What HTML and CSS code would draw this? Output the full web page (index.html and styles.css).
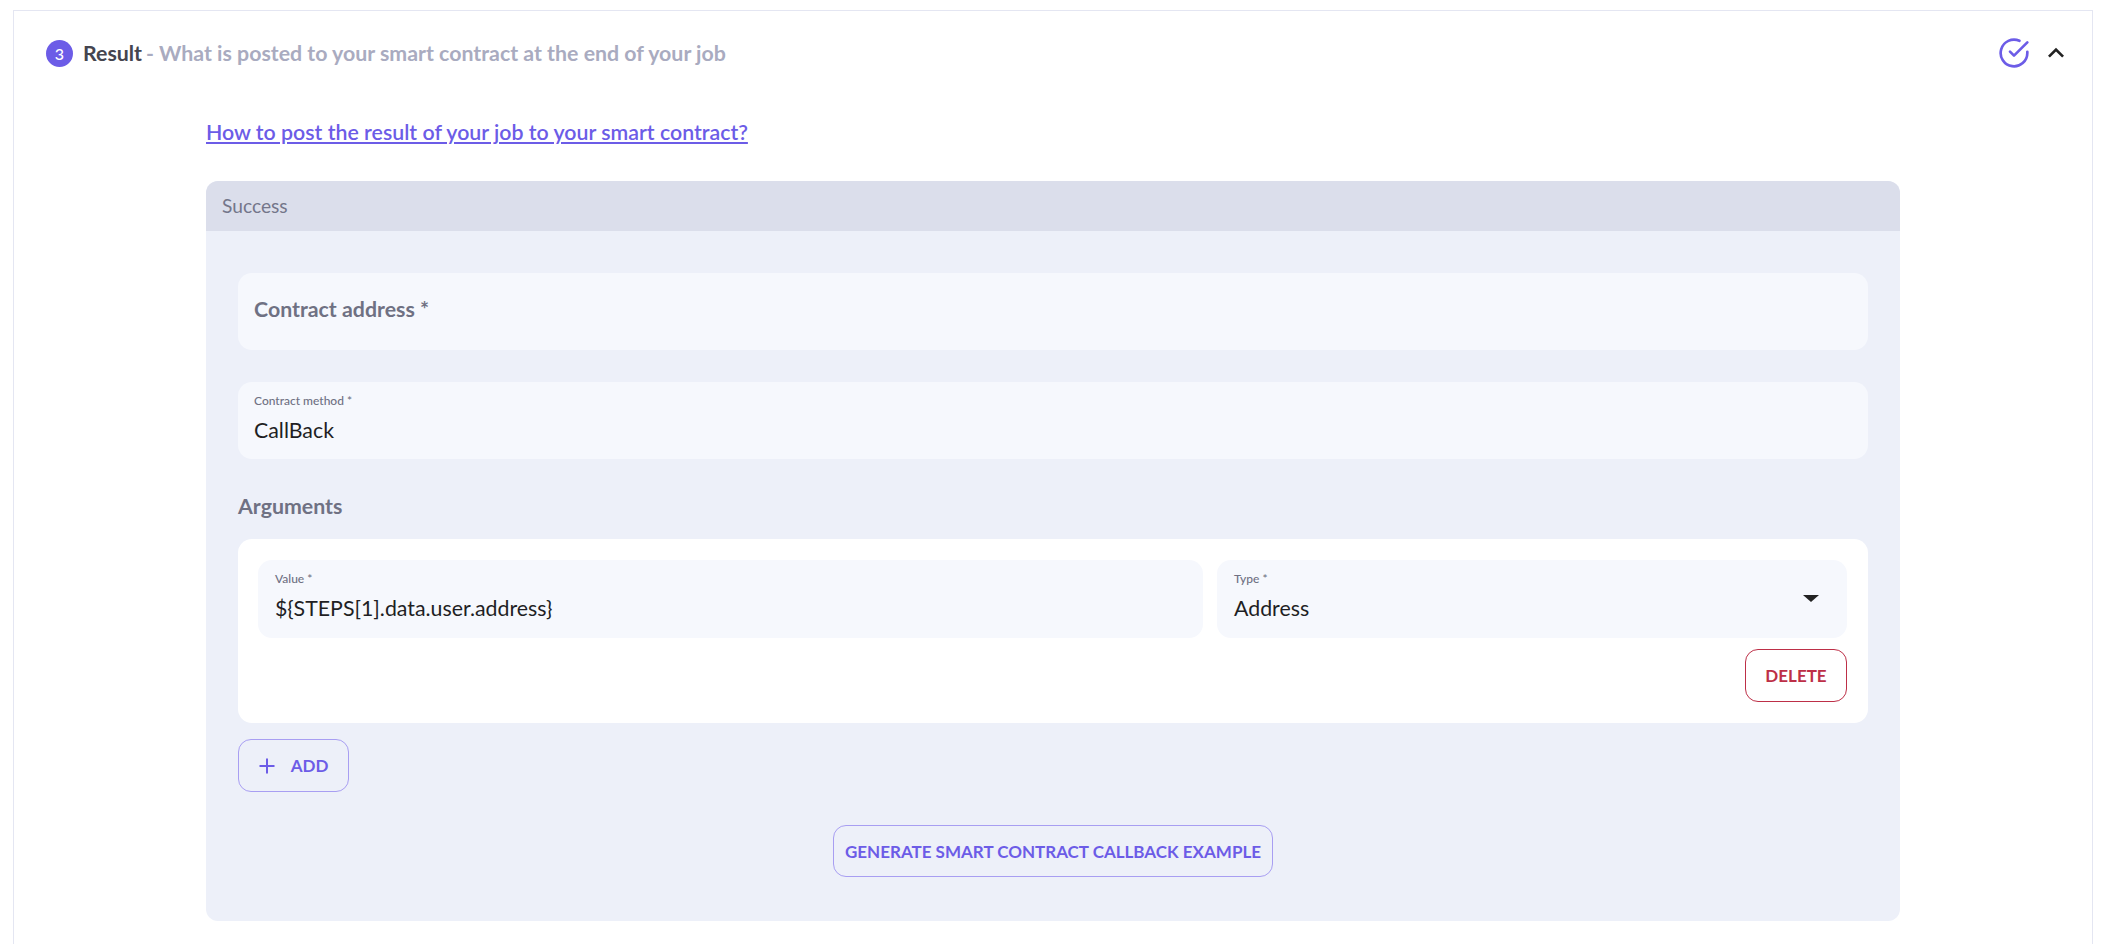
FILE: index.html
```html
<!DOCTYPE html>
<html lang="en">
<head>
  <meta charset="UTF-8">
  <title>Result</title>
  <link rel="stylesheet" href="styles.css">
</head>
<body>
  <section class="panel">
    <div class="panel-head">
      <div class="panel-title">
        <span class="step">3</span>
        <span class="title-main">Result</span>
        <span class="title-sub">- What is posted to your smart contract at the end of your job</span>
      </div>
      <div class="panel-icons">
        <svg class="icon" viewBox="0 0 24 24" fill="none" stroke="#6c5ce7" stroke-width="2" stroke-linecap="round" stroke-linejoin="round">
          <path d="M22 11.08V12a10 10 0 1 1-5.93-9.14"></path>
          <path d="M22 4 12 14.01l-3-3"></path>
        </svg>
        <svg class="icon" viewBox="0 0 24 24" fill="#222">
          <path d="M12 8l-6 6 1.41 1.41L12 10.83l4.59 4.58L18 14z"></path>
        </svg>
      </div>
    </div>

    <div class="panel-body">
      <a class="help-link" href="#">How to post the result of your job to your smart contract?</a>

      <div class="card">
        <div class="card-head">Success</div>
        <div class="card-body">
          <div class="field field-empty">Contract address *</div>
          <div class="field">
            <span class="field-label">Contract method *</span>
            <span class="field-value">CallBack</span>
          </div>

          <h3 class="args-title">Arguments</h3>
          <div class="args">
            <div class="args-row">
              <div class="field">
                <span class="field-label">Value *</span>
                <span class="field-value">${STEPS[1].data.user.address}</span>
              </div>
              <div class="field field-select">
                <span class="field-label">Type *</span>
                <span class="field-value">Address</span>
                <span class="select-arrow"></span>
              </div>
            </div>
            <div class="args-actions">
              <button class="btn btn-danger">Delete</button>
            </div>
          </div>

          <div class="add-row">
            <button class="btn btn-add">
              <svg class="plus" viewBox="0 0 16 16" fill="none" stroke="#6c5ce7" stroke-width="2">
                <path d="M8 0.5v15M0.5 8h15"></path>
              </svg>
              Add
            </button>
          </div>

          <div class="generate-row">
            <button class="btn btn-generate">Generate smart contract callback example</button>
          </div>
        </div>
      </div>
    </div>
  </section>
</body>
</html>
```

FILE: styles.css
```css
html, body {
  height: 944px;
  overflow: hidden;
}

body {
  margin: 0;
  padding: 10px 17px 0 13px;
  box-sizing: border-box;
  background-color: #fff;
  font-family: "Lato", "Liberation Sans", sans-serif;
  color: #1f1f24;
}

.panel {
  border: 1px solid #e4e6f2;
  border-bottom: none;
  height: 934px;
  box-sizing: border-box;
  padding: 26px 20px 0 32px;
}

.panel-head {
  display: flex;
  justify-content: space-between;
  align-items: center;
  height: 32px;
}

.panel-title {
  display: flex;
  align-items: center;
  font-size: 21.33px;
  font-weight: 700;
}

.step {
  width: 27px;
  height: 27px;
  border-radius: 50%;
  background-color: #6c5ce7;
  color: #fff;
  font-size: 16px;
  font-weight: 500;
  display: flex;
  align-items: center;
  justify-content: center;
  margin-right: 10px;
}

.title-main {
  color: #45454f;
  margin-right: 4px;
}

.title-sub {
  color: #a9abc0;
}

.panel-icons {
  display: flex;
  gap: 10px;
}

.icon {
  width: 32px;
  height: 32px;
  display: block;
}

.panel-body {
  margin: 51px 172px 0 160px;
}

.help-link {
  display: block;
  font-size: 21.33px;
  line-height: 24px;
  font-weight: 600;
  color: #6c5ce7;
  text-decoration: underline;
  margin-bottom: 37px;
}

.card {
  border-radius: 12px;
  overflow: hidden;
  background-color: #edf0f9;
}

.card-head {
  height: 50px;
  line-height: 50px;
  padding-left: 16px;
  background-color: #dbdeeb;
  color: #74768a;
  font-size: 19.2px;
}

.card-body {
  padding: 42px 32px 44px 32px;
}

.field {
  height: 77px;
  box-sizing: border-box;
  border-radius: 14px;
  background-color: #f6f8fd;
  padding: 11px 16px 0 16px;
  margin-bottom: 32px;
  position: relative;
}

.field-empty {
  padding-top: 22px;
  font-size: 21.33px;
  line-height: 28px;
  font-weight: 700;
  color: #6f7183;
}

.field-label {
  display: block;
  font-size: 12px;
  line-height: 16px;
  font-weight: 500;
  color: #6f7183;
}

.field-value {
  display: block;
  font-size: 21.33px;
  line-height: 30px;
  margin-top: 6px;
}

.select-arrow {
  position: absolute;
  right: 28px;
  top: 35px;
  border-left: 8px solid transparent;
  border-right: 8px solid transparent;
  border-top: 7px solid #222;
}

.args-title {
  margin: 35px 0 21px 0;
  font-size: 21.33px;
  line-height: 24px;
  font-weight: 700;
  color: #6f7183;
}

.args {
  background-color: #fff;
  border-radius: 14px;
  padding: 21px 21px 21px 20px;
}

.args-row {
  display: grid;
  grid-template-columns: 3fr 2fr;
  gap: 14px;
}

.args-row .field {
  height: 78px;
  margin-bottom: 0;
}

.args-row .field-label,
.args-row .field-value {
  margin-left: 1px;
}

.args-actions {
  display: flex;
  justify-content: flex-end;
  margin-top: 11px;
}

.btn {
  font-family: inherit;
  font-size: 17px;
  font-weight: 700;
  text-transform: uppercase;
  height: 53px;
  border-radius: 13px;
  background: transparent;
  box-sizing: border-box;
  display: inline-flex;
  align-items: center;
  justify-content: center;
}

.btn-danger {
  width: 102px;
  color: #bd2f47;
  border: 1px solid #bd2f47;
}

.add-row {
  margin-top: 16px;
}

.btn-add {
  width: 111px;
  color: #6c5ce7;
  border: 1px solid #a89ef2;
  gap: 16px;
}

.plus {
  width: 16px;
  height: 16px;
}

.generate-row {
  display: flex;
  justify-content: center;
  margin-top: 33px;
}

.btn-generate {
  width: 440px;
  height: 52px;
  padding: 0;
  color: #6c5ce7;
  border: 1px solid #a89ef2;
}
```
